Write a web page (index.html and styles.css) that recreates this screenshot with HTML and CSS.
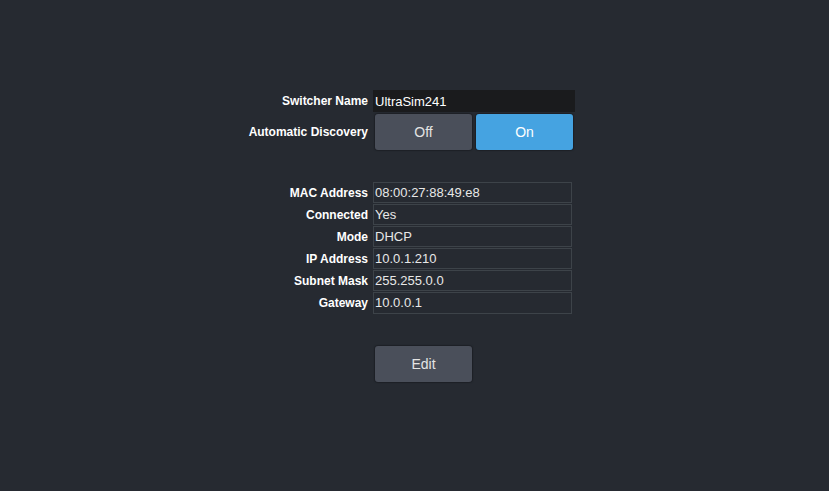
FILE: index.html
```html
<!DOCTYPE html>
<html lang="en">
  <head>
    <meta charset="UTF-8" />
    <meta name="viewport" content="width=device-width, initial-scale=1.0" />
    <title>Network Settings</title>
    <link rel="stylesheet" href="styles.css">
  </head>
  <body>
    <div class="panel">
      <section class="settings">
        <label class="label" for="switcherName">Switcher Name</label>
        <input class="nameInput" type="text" id="switcherName" value="UltraSim241" />

        <span class="label">Automatic Discovery</span>
        <div class="toggle">
          <button class="btn">Off</button>
          <button class="btn active">On</button>
        </div>
      </section>

      <section class="network">
        <span class="label">MAC Address</span>
        <div class="cell">08:00:27:88:49:e8</div>
        <span class="label">Connected</span>
        <div class="cell">Yes</div>
        <span class="label">Mode</span>
        <div class="cell">DHCP</div>
        <span class="label">IP Address</span>
        <div class="cell">10.0.1.210</div>
        <span class="label">Subnet Mask</span>
        <div class="cell">255.255.0.0</div>
        <span class="label">Gateway</span>
        <div class="cell">10.0.0.1</div>
      </section>

      <div class="actions">
        <button class="btn">Edit</button>
      </div>
    </div>
  </body>
</html>
```

FILE: styles.css
```css
html,
body {
  margin: 0;
  height: 100%;
}
body {
  background-color: #262a31;
  font-family: "Liberation Sans", Arial, sans-serif;
  color: #ffffff;
}
.panel {
  width: 327px;
  margin: 0 auto;
  padding-top: 90px;
}
.settings,
.network {
  display: grid;
  grid-template-columns: 117px 202px;
  column-gap: 5px;
  align-items: center;
}
.settings {
  row-gap: 2px;
}
.label {
  font-size: 12px;
  font-weight: bold;
  text-align: right;
  white-space: nowrap;
  direction: rtl;
  color: #ffffff;
}
.nameInput {
  height: 22px;
  box-sizing: border-box;
  border: none;
  outline: none;
  padding: 0 2px;
  background-color: #1a1b1d;
  color: #ffffff;
  font-family: inherit;
  font-size: 13px;
}
.toggle {
  display: flex;
  gap: 4px;
  padding-left: 2px;
}
.btn {
  width: 97px;
  height: 36px;
  border: none;
  border-radius: 3px;
  background-color: #4a4f5a;
  box-shadow: 0 0 1px 1px #1d2026;
  color: #e4e4e4;
  font-family: inherit;
  font-size: 14px;
}
.btn.active {
  background-color: #45a3e1;
  color: #ffffff;
}
.network {
  margin-top: 32px;
  row-gap: 1px;
}
.cell {
  width: 199px;
  height: 21px;
  box-sizing: border-box;
  border: 1px solid #3d4349;
  padding: 0 1px;
  font-size: 13px;
  line-height: 19px;
  color: #e8e8e8;
}
.cell:last-child {
  height: 22px;
}
.actions {
  margin-top: 32px;
  padding-left: 124px;
}
```
